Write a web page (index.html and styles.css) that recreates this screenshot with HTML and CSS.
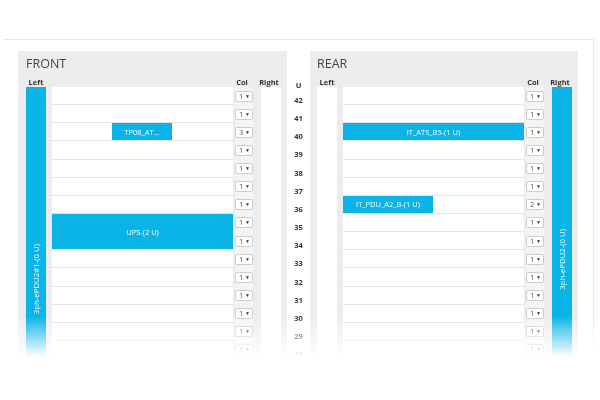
FILE: index.html
```html
<!DOCTYPE html>
<html lang="en">
<head>
  <meta charset="UTF-8" />
  <meta name="viewport" content="width=device-width, initial-scale=1" />
  <title>Rack Elevation</title>
  <link rel="stylesheet" href="styles.css">
</head>
<body>
  <div class="frame">
    <section class="panel front">
      <h2 class="title">FRONT</h2>
      <div class="heads">
        <span class="h-left">Left</span>
        <span class="h-col">Col</span>
        <span class="h-right">Right</span>
      </div>
      <div class="rack">
        <div class="side pdu"><span class="vlabel pad-front">3ph-ePDU2#1-(0 U)</span></div>
        <div class="units">
          <div class="u"><div class="slot"></div><div class="sels"><span class="sel">1<i>▼</i></span></div></div>
          <div class="u"><div class="slot"></div><div class="sels"><span class="sel">1<i>▼</i></span></div></div>
          <div class="u"><div class="slot"><div class="dev" style="margin-left:60px;width:60px">TP08_AT...</div></div><div class="sels"><span class="sel">3<i>▼</i></span></div></div>
          <div class="u"><div class="slot"></div><div class="sels"><span class="sel">1<i>▼</i></span></div></div>
          <div class="u"><div class="slot"></div><div class="sels"><span class="sel">1<i>▼</i></span></div></div>
          <div class="u"><div class="slot"></div><div class="sels"><span class="sel">1<i>▼</i></span></div></div>
          <div class="u"><div class="slot"></div><div class="sels"><span class="sel">1<i>▼</i></span></div></div>
          <div class="u"><div class="slot double"><div class="dev full">UPS-(2 U)</div></div><div class="sels"><span class="sel">1<i>▼</i></span><span class="sel">1<i>▼</i></span></div></div>
          <div class="u"><div class="slot"></div><div class="sels"><span class="sel">1<i>▼</i></span></div></div>
          <div class="u"><div class="slot"></div><div class="sels"><span class="sel">1<i>▼</i></span></div></div>
          <div class="u"><div class="slot"></div><div class="sels"><span class="sel">1<i>▼</i></span></div></div>
          <div class="u"><div class="slot"></div><div class="sels"><span class="sel">1<i>▼</i></span></div></div>
          <div class="u"><div class="slot"></div><div class="sels"><span class="sel">1<i>▼</i></span></div></div>
          <div class="u"><div class="slot"></div><div class="sels"><span class="sel">1<i>▼</i></span></div></div>
        </div>
        <div class="side empty right"></div>
      </div>
    </section>

    <div class="unum">
      <span class="unum-head">U</span>
      <span>42</span><span>41</span><span>40</span><span>39</span><span>38</span>
      <span>37</span><span>36</span><span>35</span><span>34</span><span>33</span>
      <span>32</span><span>31</span><span>30</span><span>29</span><span>28</span>
    </div>

    <section class="panel rear">
      <h2 class="title">REAR</h2>
      <div class="heads">
        <span class="h-left">Left</span>
        <span class="h-col">Col</span>
        <span class="h-right">Right</span>
      </div>
      <div class="rack">
        <div class="side empty"></div>
        <div class="units">
          <div class="u"><div class="slot"></div><div class="sels"><span class="sel">1<i>▼</i></span></div></div>
          <div class="u"><div class="slot"></div><div class="sels"><span class="sel">1<i>▼</i></span></div></div>
          <div class="u"><div class="slot"><div class="dev full">IT_ATS_B5-(1 U)</div></div><div class="sels"><span class="sel">1<i>▼</i></span></div></div>
          <div class="u"><div class="slot"></div><div class="sels"><span class="sel">1<i>▼</i></span></div></div>
          <div class="u"><div class="slot"></div><div class="sels"><span class="sel">1<i>▼</i></span></div></div>
          <div class="u"><div class="slot"></div><div class="sels"><span class="sel">1<i>▼</i></span></div></div>
          <div class="u"><div class="slot"><div class="dev" style="width:90px">IT_PDU_A2_B-(1 U)</div></div><div class="sels"><span class="sel">2<i>▼</i></span></div></div>
          <div class="u"><div class="slot"></div><div class="sels"><span class="sel">1<i>▼</i></span></div></div>
          <div class="u"><div class="slot"></div><div class="sels"><span class="sel">1<i>▼</i></span></div></div>
          <div class="u"><div class="slot"></div><div class="sels"><span class="sel">1<i>▼</i></span></div></div>
          <div class="u"><div class="slot"></div><div class="sels"><span class="sel">1<i>▼</i></span></div></div>
          <div class="u"><div class="slot"></div><div class="sels"><span class="sel">1<i>▼</i></span></div></div>
          <div class="u"><div class="slot"></div><div class="sels"><span class="sel">1<i>▼</i></span></div></div>
          <div class="u"><div class="slot"></div><div class="sels"><span class="sel">1<i>▼</i></span></div></div>
          <div class="u"><div class="slot"></div><div class="sels"><span class="sel">1<i>▼</i></span></div></div>
        </div>
        <div class="side pdu right"><span class="vlabel pad-rear">3ph-ePDU2-(0 U)</span></div>
      </div>
    </section>
  </div>
</body>
</html>
```

FILE: styles.css
```css
body {
  margin: 0;
  background: #fff;
  font-family: "Open Sans", Arial, sans-serif;
  color: #333;
}
.frame {
  display: flex;
  align-items: flex-start;
  width: 575px;
  height: 360px;
  margin: 39px 0 0 3px;
  padding: 11px 0 0 15px;
  border-top: 1px solid #e9e9e9;
  border-right: 1px solid #e9e9e9;
  overflow: hidden;
  -webkit-mask-image: linear-gradient(to bottom, #000 277px, transparent 318px);
  mask-image: linear-gradient(to bottom, #000 277px, transparent 318px);
}
.panel {
  background: #ececec;
  padding: 0 6px 20px 8px;
  width: 255px;
}
.panel.rear {
  padding-left: 7px;
}
.title {
  margin: 0;
  padding-top: 5px;
  font-size: 12.5px;
  line-height: 16px;
  font-weight: normal;
  color: #444;
}
.heads {
  display: flex;
  align-items: flex-end;
  height: 15px;
  font-size: 7.5px;
  line-height: 10px;
  font-weight: bold;
  color: #333;
}
.heads span {
  text-align: center;
}
.h-left { width: 20px; }
.h-col { width: 18px; margin-left: 187px; }
.h-right { width: 20px; margin-left: 8px; }

.rack {
  display: flex;
}
.side {
  width: 20px;
  display: flex;
  flex-direction: column;
  align-items: center;
}
.side.pdu { background: #0ab4e6; }
.side.empty { background: #fff; }
.side.right { margin-left: 8px; }
.units {
  width: 201px;
  margin-left: 6px;
}
.u {
  display: flex;
}
.slot {
  width: 181px;
  height: 18.15px;
  box-sizing: border-box;
  background: #fff;
  border-bottom: 1px solid #e3e3e3;
  display: flex;
}
.slot.double {
  height: 36.3px;
}
.dev {
  background: #0ab4e6;
  color: #fff;
  font-size: 7.5px;
  display: flex;
  align-items: center;
  justify-content: center;
  height: 100%;
}
.dev.full {
  width: 100%;
}
.sels {
  width: 18px;
  margin-left: 2px;
  background: #f4f4f4;
  display: flex;
  flex-direction: column;
}
.sel {
  height: 11px;
  margin: 3.5px 0 3.65px;
  box-sizing: border-box;
  border: 1px solid #cdcdcd;
  border-radius: 2px;
  background: #fff;
  font-size: 7.5px;
  line-height: 9px;
  color: #555;
  display: flex;
  justify-content: space-between;
  padding: 0 2px 0 3px;
}
.sel i {
  font-style: normal;
  font-size: 5px;
  color: #333;
}
.vlabel {
  writing-mode: vertical-rl;
  transform: rotate(180deg);
  color: #fff;
  font-size: 7.8px;
  white-space: nowrap;
}
.pad-front { margin-top: 157px; }
.pad-rear { margin-top: 142px; }

.unum {
  width: 23px;
  align-self: stretch;
  background: #fff;
  padding-top: 28px;
  display: flex;
  flex-direction: column;
  align-items: center;
  font-size: 7.5px;
  font-weight: bold;
  color: #333;
}
.unum span {
  line-height: 18.15px;
}
.unum .unum-head {
  line-height: 12px;
}
```
